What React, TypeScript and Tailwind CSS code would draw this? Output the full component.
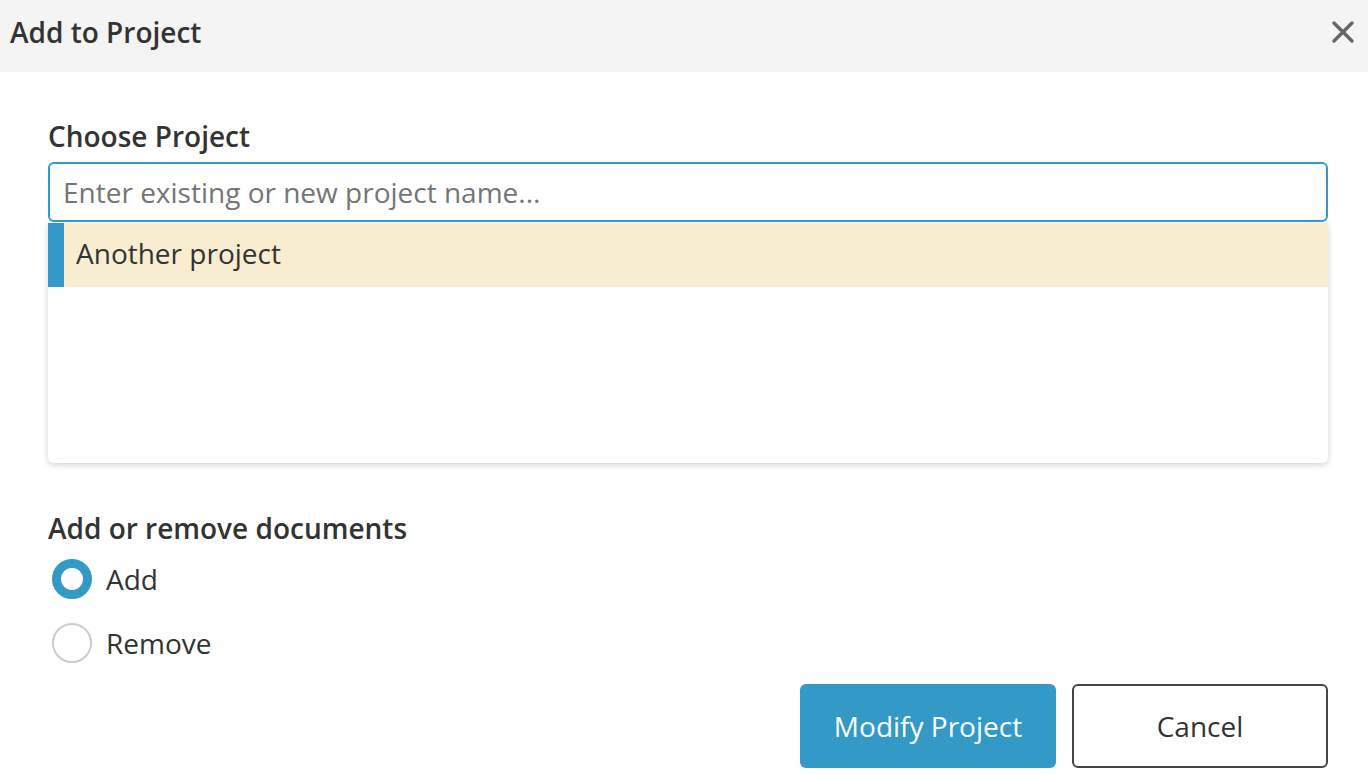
import React from 'react';
import { X } from 'lucide-react';

function Radio({ label, checked }: { label: string; checked?: boolean }) {
    return (
        <label className="flex items-center gap-[14px] h-[64px]">
            <span
                className={
                    checked
                        ? "w-[40px] h-[40px] rounded-full border-[9px] border-[#3399c6] bg-white ml-[4px] box-border"
                        : "w-[40px] h-[40px] rounded-full border-2 border-[#cccccc] bg-white ml-[4px] box-border"
                }
            />
            <span className="text-[28px] text-[#333333]">{label}</span>
        </label>
    );
}

export default function App() {
    return (
        <div className="w-[1368px] h-[780px] bg-white overflow-hidden font-['Open_Sans',sans-serif] text-[#333333]">
            <div className="h-[72px] bg-[#f4f4f4] flex items-center justify-between pl-[10px] pr-[7px] pb-[8px]">
                <h1 className="text-[28px] font-semibold text-[#333333]">Add to Project</h1>
                <X className="w-[36px] h-[36px] text-[#666666]" strokeWidth={2.3} />
            </div>

            <div className="pl-[48px] pr-[40px] pt-[44px]">
                <div className="text-[28px] font-semibold leading-[40px] mb-[6px] text-[#333333]">Choose Project</div>
                <input
                    className="w-full h-[60px] border-2 border-[#3399c6] rounded-[6px] px-[13px] text-[28px] outline-none placeholder:text-[#757575]"
                    placeholder="Enter existing or new project name..."
                />
                <div className="h-[240px] bg-white rounded-b-[6px] shadow-[0_2px_6px_rgba(0,0,0,0.18)] overflow-hidden mt-[1px]">
                    <div className="flex h-[64px] bg-[#f9edd1]">
                        <div className="w-[16px] bg-[#3399c6]" />
                        <div className="flex items-center pl-[12px] pb-[4px] text-[28px] text-[#333333]">Another project</div>
                    </div>
                </div>

                <div className="mt-[45px] text-[28px] font-semibold leading-[40px] text-[#333333]">Add or remove documents</div>
                <div className="flex flex-col -mt-[1px]">
                    <Radio label="Add" checked />
                    <Radio label="Remove" />
                </div>

                <div className="flex justify-end gap-[16px] mt-[9px]">
                    <button className="w-[256px] h-[84px] bg-[#3399c6] text-white text-[28px] rounded-[6px]">
                        Modify Project
                    </button>
                    <button className="w-[256px] h-[84px] bg-white border-2 border-[#444444] text-[#333333] text-[28px] rounded-[6px]">
                        Cancel
                    </button>
                </div>
            </div>
        </div>
    );
}
